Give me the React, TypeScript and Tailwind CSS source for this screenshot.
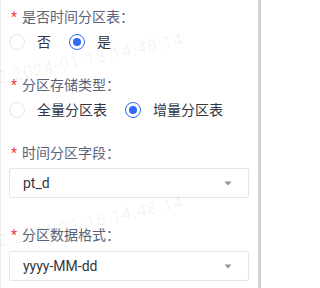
import React from "react";

const font = { fontFamily: 'Roboto, "Noto Sans CJK SC", sans-serif' };

function Label({ text }: { text: string }) {
  return (
    <div className="flex items-center h-[22px] text-[14px] leading-[22px] text-[#5c6278]">
      <span className="text-[#f53f3f] ml-[2px] mr-[5px] text-[14px]">*</span>
      <span>{text}</span>
    </div>
  );
}

function Radio({ checked, label }: { checked?: boolean; label: string }) {
  return (
    <div className="flex items-center mr-[18px]">
      {checked ? (
        <span className="w-4 h-4 rounded-full border-[1.5px] border-[#2f6bf6] flex items-center justify-center">
          <span className="w-2 h-2 rounded-full bg-[#2f6bf6]" />
        </span>
      ) : (
        <span className="w-4 h-4 rounded-full border border-[#e3e5ea] bg-white" />
      )}
      <span className="ml-[12px] text-[14px] leading-[16px] text-[#333640]">{label}</span>
    </div>
  );
}

function Select({ value }: { value: string }) {
  return (
    <div className="w-[240px] h-[30px] border border-[#e4e6eb] rounded-[2px] bg-white flex items-center justify-between pl-[13px] pr-[16px]">
      <span className="text-[14px] text-[#333640]">{value}</span>
      <svg width="8" height="5" viewBox="0 0 8 5">
        <path d="M0.5 0.5 L7.5 0.5 L4 4.5 Z" fill="#8e939c" />
      </svg>
    </div>
  );
}

export default function App() {
  return (
    <div className="w-[261px] h-[288px] relative overflow-hidden bg-white flex" style={font}>
      <div className="flex-1 border-l border-[#ececec] pl-[8px] pt-[6px]">
        <Label text="是否时间分区表：" />
        <div className="flex items-center mt-[6px] h-4">
          <Radio label="否" />
          <Radio checked label="是" />
        </div>
        <div className="mt-[24px]">
          <Label text="分区存储类型：" />
        </div>
        <div className="flex items-center mt-[6px] h-4">
          <Radio label="全量分区表" />
          <Radio checked label="增量分区表" />
        </div>
        <div className="mt-[24px]">
          <Label text="时间分区字段：" />
        </div>
        <div className="mt-[4px]">
          <Select value="pt_d" />
        </div>
        <div className="mt-[26px]">
          <Label text="分区数据格式：" />
        </div>
        <div className="mt-[5px]">
          <Select value="yyyy-MM-dd" />
        </div>
      </div>
      <div className="w-[3px] bg-[#d3d3d3]" />
      <div className="absolute left-[-1px] top-[70px] text-[17px] leading-[17px] tracking-[1px] text-black/[0.06] whitespace-nowrap origin-bottom-left -rotate-12 pointer-events-none" style={{ fontFamily: "Roboto, sans-serif" }}>
        2 2024-01-18 14:48:14
      </div>
      <div className="absolute left-[-1px] top-[233px] text-[17px] leading-[17px] tracking-[1px] text-black/[0.06] whitespace-nowrap origin-bottom-left -rotate-12 pointer-events-none" style={{ fontFamily: "Roboto, sans-serif" }}>
        2 2024-01-18 14:48:14
      </div>
    </div>
  );
}
